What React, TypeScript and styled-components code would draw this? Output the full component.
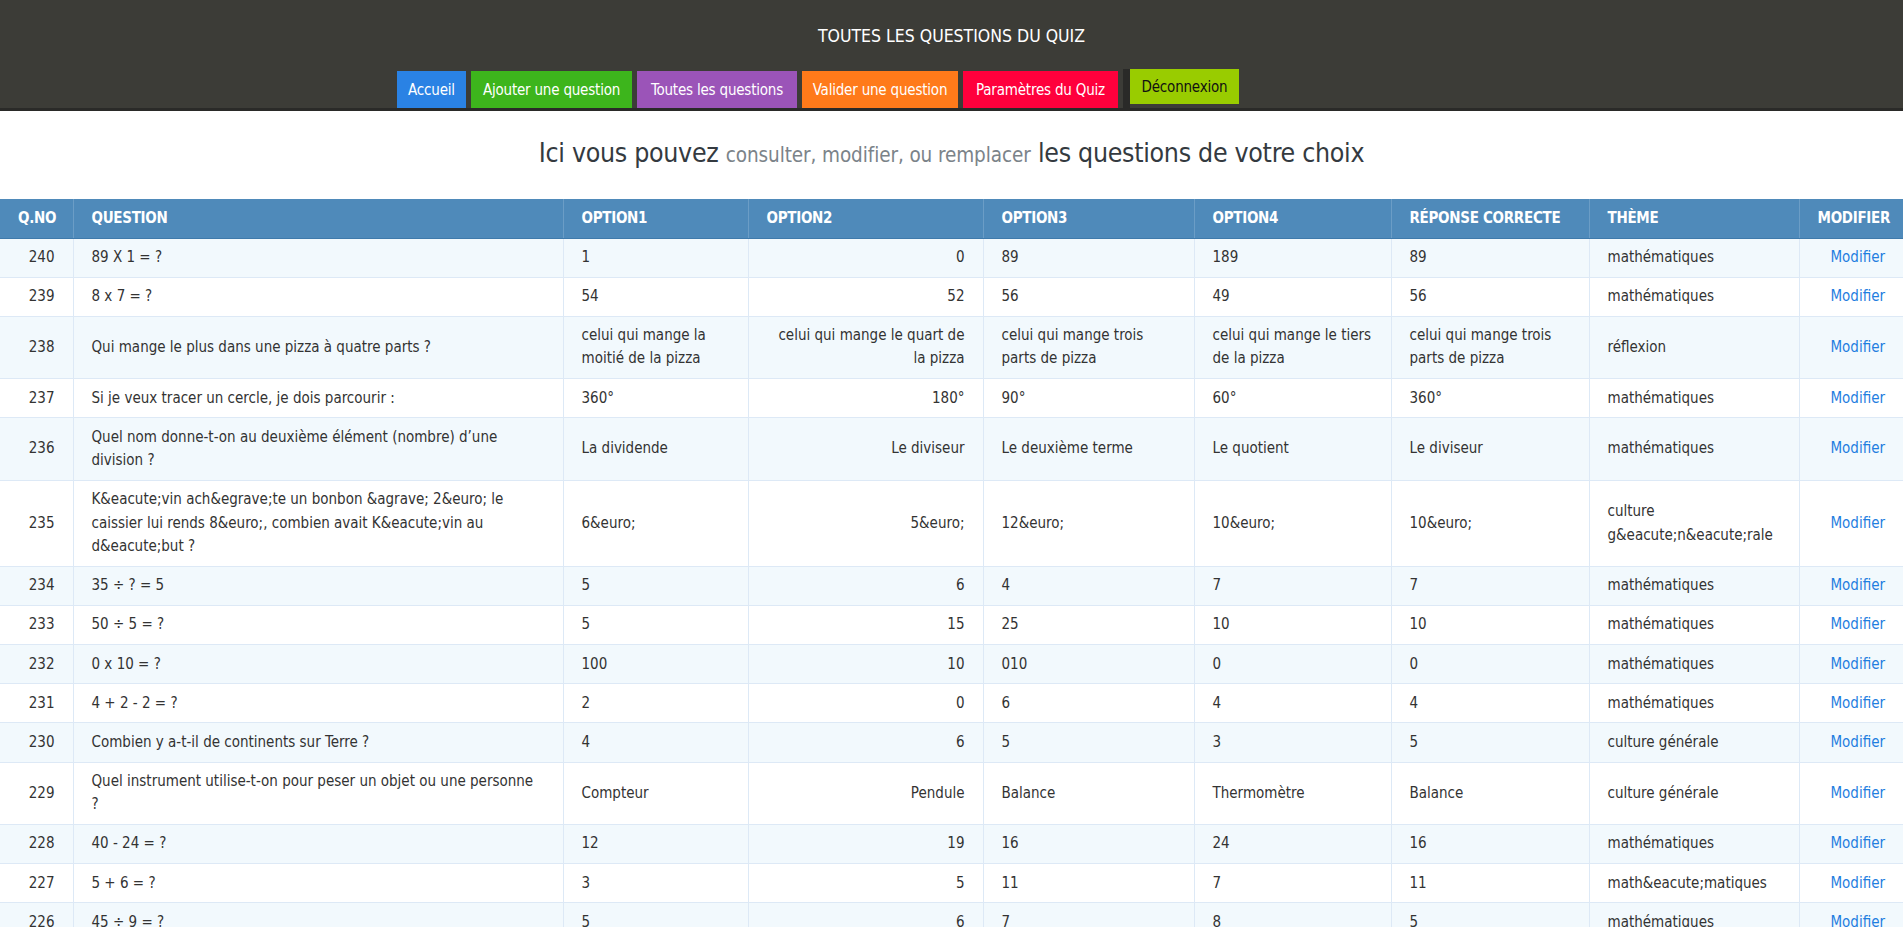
import React from "react";
import styled, { createGlobalStyle } from "styled-components";

const Global = createGlobalStyle`
  html, body { margin: 0; padding: 0; background: #ffffff; }
  body { font-family: "DejaVu Sans Condensed", "DejaVu Sans", sans-serif; color: #333; }
  * { box-sizing: border-box; }
`;

const Header = styled.header`
  background: #3c3c37;
  border-bottom: 3px solid #2a2a28;
  height: 111px;
  display: flex;
  flex-direction: column;
`;

const SiteTitle = styled.h1`
  margin: 0;
  padding-top: 26px;
  height: 71px;
  text-align: center;
  color: #ffffff;
  font-weight: normal;
  font-size: 17.5px;
  line-height: 21px;
`;

const Nav = styled.nav`
  display: flex;
  align-items: flex-end;
  gap: 5px;
  padding-left: 397px;
  height: 37px;
`;

const NavButton = styled.a<{ $bg: string; $fg?: string; $w: number }>`
  display: flex;
  align-items: center;
  justify-content: center;
  width: ${(p) => p.$w}px;
  height: 37px;
  background: ${(p) => p.$bg};
  color: ${(p) => p.$fg || "#ffffff"};
  font-size: 15px;
  text-decoration: none;
  white-space: nowrap;
  letter-spacing: -0.2px;
`;

const LogoutWrap = styled.div`
  display: flex;
  align-self: flex-start;
  margin-top: -2px;
  height: 39px;
  border-left: 7px solid #2a2a28;
`;

const LogoutButton = styled(NavButton)`
  height: 35px;
`;

const Intro = styled.h2`
  margin: 0;
  padding: 24.5px 0 27px;
  text-align: center;
  font-weight: normal;
  font-size: 26.5px;
  line-height: 34px;
  color: #343a40;
  letter-spacing: -0.3px;
`;

const Muted = styled.span`
  font-size: 20.5px;
  color: #7b8389;
  letter-spacing: -0.1px;
`;

const Table = styled.table`
  width: 100%;
  border-collapse: collapse;
  table-layout: fixed;
  font-size: 15px;
`;

const Th = styled.th<{ $right?: boolean }>`
  background: #4f8aba;
  color: #ffffff;
  font-weight: bold;
  text-transform: uppercase;
  text-align: ${(p) => (p.$right ? "right" : "left")};
  padding: 8px 18px;
  line-height: 23px;
  border-left: 1px solid #6b9dc6;
  border-bottom: 1px solid #3f7aab;
  letter-spacing: -0.3px;
  &:first-child { border-left: none; }
`;

const Tr = styled.tr<{ $odd: boolean }>`
  background: ${(p) => (p.$odd ? "#f2f9fd" : "#ffffff")};
`;

const Td = styled.td<{ $right?: boolean }>`
  padding: 7.3px 18px;
  line-height: 23.5px;
  text-align: ${(p) => (p.$right ? "right" : "left")};
  vertical-align: middle;
  border-left: 1px solid #dde9f6;
  border-bottom: 1px solid #dde9f6;
  color: #333333;
  &:first-child { border-left: none; }
`;

const EditLink = styled.a`
  color: #1f7ee0;
  text-decoration: none;
`;

type Row = [number, string, string, string, string, string, string, string];

const rows: Row[] = [
  [240, "89 X 1 = ?", "1", "0", "89", "189", "89", "mathématiques"],
  [239, "8 x 7 = ?", "54", "52", "56", "49", "56", "mathématiques"],
  [238, "Qui mange le plus dans une pizza à quatre parts ?", "celui qui mange la moitié de la pizza", "celui qui mange le quart de la pizza", "celui qui mange trois parts de pizza", "celui qui mange le tiers de la pizza", "celui qui mange trois parts de pizza", "réflexion"],
  [237, "Si je veux tracer un cercle, je dois parcourir :", "360°", "180°", "90°", "60°", "360°", "mathématiques"],
  [236, "Quel nom donne-t-on au deuxième élément (nombre) d’une division ?", "La dividende", "Le diviseur", "Le deuxième terme", "Le quotient", "Le diviseur", "mathématiques"],
  [235, "K&eacute;vin ach&egrave;te un bonbon &agrave; 2&euro; le caissier lui rends 8&euro;, combien avait K&eacute;vin au d&eacute;but ?", "6&euro;", "5&euro;", "12&euro;", "10&euro;", "10&euro;", "culture g&eacute;n&eacute;rale"],
  [234, "35 ÷ ? = 5", "5", "6", "4", "7", "7", "mathématiques"],
  [233, "50 ÷ 5 = ?", "5", "15", "25", "10", "10", "mathématiques"],
  [232, "0 x 10 = ?", "100", "10", "010", "0", "0", "mathématiques"],
  [231, "4 + 2 - 2 = ?", "2", "0", "6", "4", "4", "mathématiques"],
  [230, "Combien y a-t-il de continents sur Terre ?", "4", "6", "5", "3", "5", "culture générale"],
  [229, "Quel instrument utilise-t-on pour peser un objet ou une personne ?", "Compteur", "Pendule", "Balance", "Thermomètre", "Balance", "culture générale"],
  [228, "40 - 24 = ?", "12", "19", "16", "24", "16", "mathématiques"],
  [227, "5 + 6 = ?", "3", "5", "11", "7", "11", "math&eacute;matiques"],
  [226, "45 ÷ 9 = ?", "5", "6", "7", "8", "5", "mathématiques"],
];

const colWidths = [73, 490, 185, 235, 211, 197, 198, 210, 104];

export default function App() {
  return (
    <>
      <Global />
      <Header>
        <SiteTitle>TOUTES LES QUESTIONS DU QUIZ</SiteTitle>
        <Nav>
          <NavButton $w={69} $bg="#2a82e4">Accueil</NavButton>
          <NavButton $w={161} $bg="#3db51c">Ajouter une question</NavButton>
          <NavButton $w={160} $bg="#9b54b8">Toutes les questions</NavButton>
          <NavButton $w={156} $bg="#ff7a1a">Valider une question</NavButton>
          <NavButton $w={155} $bg="#ff003c">Paramètres du Quiz</NavButton>
          <LogoutWrap>
            <LogoutButton $w={109} $bg="#99cc00" $fg="#111111">Déconnexion</LogoutButton>
          </LogoutWrap>
        </Nav>
      </Header>
      <Intro>
        Ici vous pouvez <Muted>consulter, modifier, ou remplacer</Muted> les questions de votre choix
      </Intro>
      <Table>
        <colgroup>
          {colWidths.map((w, i) => (
            <col key={i} style={{ width: w }} />
          ))}
        </colgroup>
        <thead>
          <tr>
            <Th $right>Q.No</Th>
            <Th>Question</Th>
            <Th>Option1</Th>
            <Th>Option2</Th>
            <Th>Option3</Th>
            <Th>Option4</Th>
            <Th>Réponse correcte</Th>
            <Th>Thème</Th>
            <Th $right>Modifier</Th>
          </tr>
        </thead>
        <tbody>
          {rows.map((r, i) => (
            <Tr key={r[0]} $odd={i % 2 === 0}>
              <Td $right>{r[0]}</Td>
              <Td>{r[1]}</Td>
              <Td>{r[2]}</Td>
              <Td $right>{r[3]}</Td>
              <Td>{r[4]}</Td>
              <Td>{r[5]}</Td>
              <Td>{r[6]}</Td>
              <Td>{r[7]}</Td>
              <Td $right>
                <EditLink href="#">Modifier</EditLink>
              </Td>
            </Tr>
          ))}
        </tbody>
      </Table>
    </>
  );
}
